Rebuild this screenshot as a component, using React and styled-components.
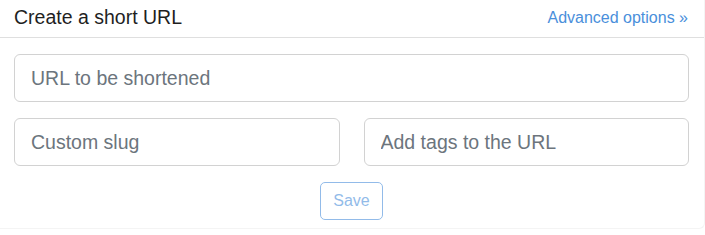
import React from "react";
import styled, { createGlobalStyle } from "styled-components";

const GlobalStyle = createGlobalStyle`
  * { box-sizing: border-box; }
  body {
    margin: 0;
    background: #fff;
    font-family: "Liberation Sans", Arial, sans-serif;
    color: #212529;
  }
`;

const Card = styled.form`
  width: 705px;
  background: #fff;
  border-right: 1px solid #f4f4f4;
  border-bottom: 1px solid #f4f4f4;
  border-bottom-right-radius: 6px;
`;

const Header = styled.div`
  display: flex;
  align-items: center;
  justify-content: space-between;
  height: 38px;
  padding: 0 16px 1px 14px;
  border-bottom: 1px solid #dfdfdf;
`;

const Title = styled.h5`
  margin: 0;
  font-size: 19.5px;
  font-weight: 500;
  line-height: 1.2;
  color: #1f1f1f;
`;

const Link = styled.a`
  font-size: 16px;
  color: #4a8fdb;
  text-decoration: none;
  cursor: pointer;
`;

const Body = styled.div`
  display: flex;
  flex-direction: column;
  gap: 16px;
  padding: 16px 15px 8px 14px;
`;

const Row = styled.div`
  display: grid;
  grid-template-columns: ${(p) => (p.$split ? "1fr 1fr" : "1fr")};
  gap: 24px;
`;

const Input = styled.input`
  width: 100%;
  height: 48px;
  padding: 0 16px;
  font-family: inherit;
  font-size: 19.5px;
  color: #495057;
  border: 1px solid #d2d2d2;
  border-radius: 6px;
  outline: none;
  &::placeholder {
    color: #6c757d;
  }
`;

const Actions = styled.div`
  display: flex;
  justify-content: center;
`;

const SaveButton = styled.button`
  height: 38px;
  padding: 0 12px;
  font-family: inherit;
  font-size: 16px;
  color: #4a8fdb;
  background: transparent;
  border: 1px solid #4a8fdb;
  border-radius: 5px;
  opacity: 0.6;
`;

export default function App() {
  return (
    <>
      <GlobalStyle />
      <Card onSubmit={(e) => e.preventDefault()}>
        <Header>
          <Title>Create a short URL</Title>
          <Link>Advanced options »</Link>
        </Header>
        <Body>
          <Row>
            <Input placeholder="URL to be shortened" />
          </Row>
          <Row $split>
            <Input placeholder="Custom slug" />
            <Input placeholder="Add tags to the URL" />
          </Row>
          <Actions>
            <SaveButton type="submit" disabled>
              Save
            </SaveButton>
          </Actions>
        </Body>
      </Card>
    </>
  );
}
